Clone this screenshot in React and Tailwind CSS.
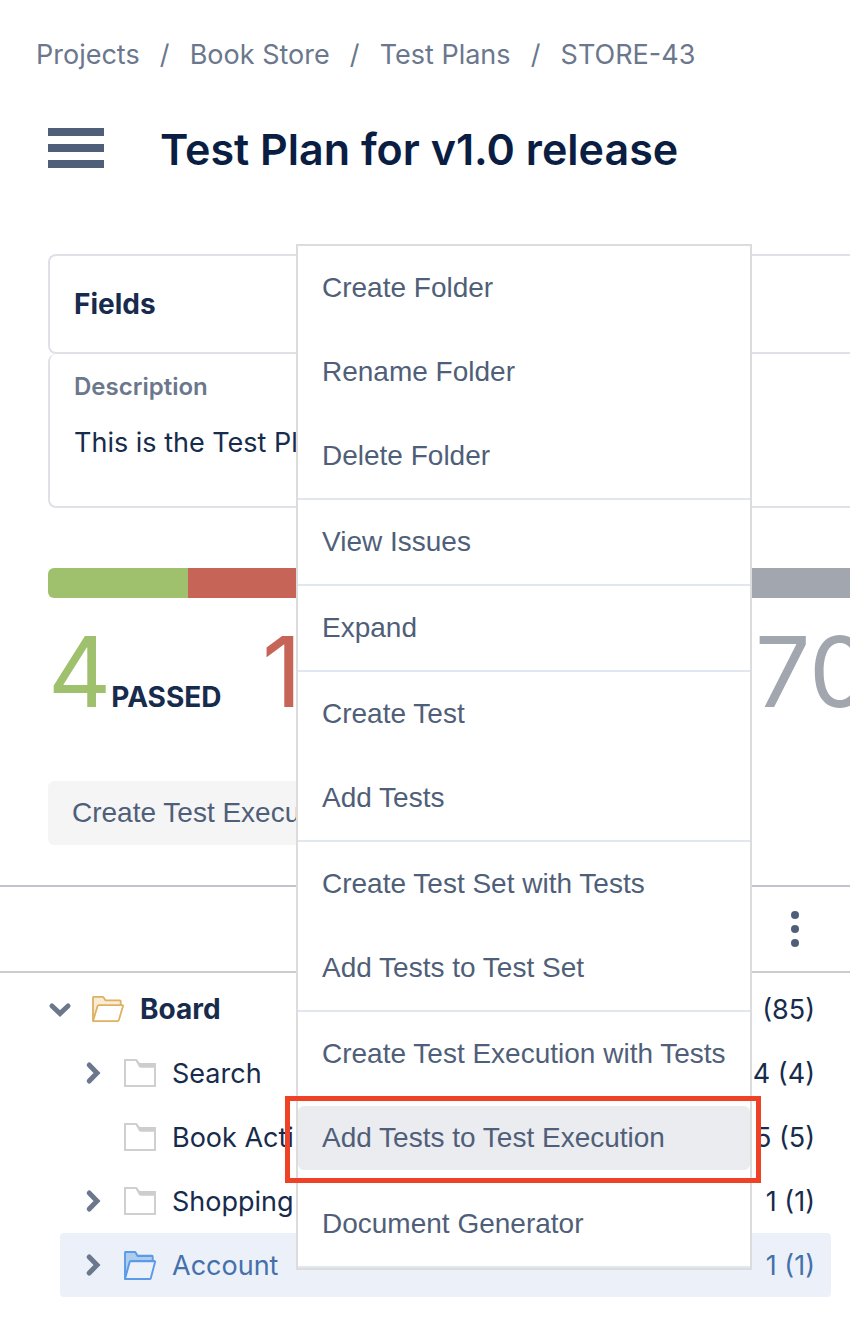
import React from "react";

const breadcrumbs = ["Projects", "Book Store", "Test Plans", "STORE-43"];

const menuGroups = [
    ["Create Folder", "Rename Folder", "Delete Folder"],
    ["View Issues"],
    ["Expand"],
    ["Create Test", "Add Tests"],
    ["Create Test Set with Tests", "Add Tests to Test Set"],
    ["Create Test Execution with Tests", "Add Tests to Test Execution"],
    ["Document Generator"],
];

const activeItem = "Add Tests to Test Execution";

const folders = [
    { name: "Search", count: "4 (4)", children: true },
    { name: "Book Acti", count: "5 (5)", children: false },
    { name: "Shopping", count: "1 (1)", children: true },
    { name: "Account", count: "1 (1)", children: true, selected: true },
];

const Chevron = ({ open }) => (
    <svg
        viewBox="0 0 32 32"
        className="size-8 shrink-0"
        fill="none"
        stroke="#6b778c"
        strokeWidth="5"
        strokeLinecap="round"
    >
        <path d={open ? "M8 13L16 20.5L24 13" : "M13.2 8L21 16L13.2 24"} />
    </svg>
);

const ClosedFolder = () => (
    <svg viewBox="0 0 32 28" className="h-7 w-8 shrink-0">
        <path d="M12.3 0L15 4H32V8.8H17Q15.6 8.8 14.8 7.4L11.5 1.5Z" fill="#cdcdcd" />
        <path d="M31 4V27H1V1H12.2L15 4.5" fill="none" stroke="#cfcfcf" strokeWidth="2" />
    </svg>
);

const OpenFolder = ({ blue }) => (
    <svg
        viewBox="0 0 32 26"
        preserveAspectRatio="none"
        className={blue ? "h-[29px] w-8 shrink-0" : "h-[26px] w-8 shrink-0"}
        stroke={blue ? "#5a9ae8" : "#deb05f"}
        strokeWidth={blue ? "1.9" : "1.8"}
        strokeLinejoin="round"
    >
        <path
            d="M1 25V1.6Q1 0.9 1.7 0.9H10.6Q11.2 0.9 11.6 1.5L13.6 4.4H28Q28.7 4.4 28.7 5.1V9"
            fill={blue ? "#aecdec" : "#f9ecd7"}
        />
        <path
            d="M1 25L5.6 10Q5.9 9.1 6.8 9.1H30.2Q31.3 9.1 31 10.1L26.8 24.3Q26.5 25.1 25.7 25.1H1Z"
            fill={blue ? "#ecf1f9" : "#ffffff"}
        />
    </svg>
);

const TreeRow = ({ folder }) => (
    <li>
        <button
            type="button"
            className={
                folder.selected
                    ? "flex h-16 w-full items-center gap-4 rounded bg-[#ecf1f9] px-4 text-[#4470ab]"
                    : "flex h-16 w-full items-center gap-4 rounded px-4"
            }
        >
            {folder.children ? <Chevron /> : <span className="w-8 shrink-0" />}
            {folder.selected ? <OpenFolder blue /> : <ClosedFolder />}
            <span className="flex-1 pt-[2px] text-left">{folder.name}</span>
            <span className="pt-[2px]">{folder.count}</span>
        </button>
    </li>
);

const ContextMenu = () => (
    <div
        role="menu"
        className="absolute top-[244px] left-[296px] border-2 border-[#dcdcdd] bg-white font-['Liberation_Sans',Arial,sans-serif] text-[28px] leading-8 text-[#505f79]"
    >
        {menuGroups.map((group) => (
            <div
                key={group[0]}
                className="flex flex-col gap-5 border-b-2 border-[#e1e6f1] py-[10px]"
            >
                {group.map((item) =>
                    item === activeItem ? (
                        <div key={item} className="relative">
                            <button
                                type="button"
                                role="menuitem"
                                className="h-16 w-full rounded-md bg-[#ebecf0] px-6 text-left whitespace-nowrap"
                            >
                                {item}
                            </button>
                            {/* Highlight frame */}
                            <div className="pointer-events-none absolute -top-[10px] -right-[11px] -bottom-[13px] -left-[13px] border-5 border-[#ee4126]" />
                        </div>
                    ) : (
                        <button
                            key={item}
                            type="button"
                            role="menuitem"
                            className="h-16 rounded-md px-6 text-left whitespace-nowrap"
                        >
                            {item}
                        </button>
                    )
                )}
            </div>
        ))}
    </div>
);

const App = () => {
    return (
        <div className="relative min-h-screen overflow-hidden bg-white pb-6 font-[Inter,sans-serif] text-[28px] leading-10 text-[#172b4d]">
            <div className="pl-12">
                {/* Breadcrumbs */}
                <nav className="-ml-3 flex pt-[35px] text-[27px] text-[#6b778c]">
                    {breadcrumbs.map((crumb, index) => (
                        <React.Fragment key={crumb}>
                            {index > 0 && <span className="w-[50px] text-center">/</span>}
                            <a href="#">{crumb}</a>
                        </React.Fragment>
                    ))}
                </nav>

                <header className="mt-[45px] flex h-14 items-center gap-14">
                    <button type="button" aria-label="Menu" className="flex flex-col gap-2">
                        <span className="h-2 w-14 bg-[#505f79]" />
                        <span className="h-2 w-14 bg-[#505f79]" />
                        <span className="h-2 w-14 bg-[#505f79]" />
                    </button>
                    <h1 className="pt-[2px] text-[43px] leading-14 font-semibold text-[#091e42]">
                        Test Plan for v1.0 release
                    </h1>
                </header>

                {/* Fields */}
                <section className="mt-[78px]">
                    <div className="rounded-l-lg border-2 border-r-0 border-[#dfe1e6] px-6 py-7">
                        <h2 className="font-bold">Fields</h2>
                    </div>
                    <div className="rounded-l-lg border-2 border-t-0 border-r-0 border-[#dfe1e6] px-6 pt-[13px] pb-[43px]">
                        <h3 className="text-2xl leading-10 font-semibold text-[#6b778c]">Description</h3>
                        <p className="mt-4 text-[27px] whitespace-nowrap">This is the Test Pl</p>
                    </div>
                </section>

                {/* Progress */}
                <div className="mt-[60px] flex h-[30px] overflow-hidden rounded-l-md">
                    <div className="w-[140px] bg-[#9fc16d]" />
                    <div className="w-[385px] bg-[#c66458]" />
                    <div className="flex-1 bg-[#a2a6af]" />
                </div>
                <div className="mt-[26px] flex h-24 items-baseline whitespace-nowrap">
                    <div className="w-[214px] shrink-0">
                        <span className="text-[98px] leading-24 text-[#9fc16d]">4</span>
                        <span className="font-bold">PASSED</span>
                    </div>
                    <div className="w-[493px] shrink-0">
                        <span className="text-[98px] leading-24 text-[#c66458]">1</span>
                    </div>
                    <div>
                        <span className="text-[98px] leading-24 text-[#a2a6af]">70</span>
                    </div>
                </div>

                <button
                    type="button"
                    className="mt-[61px] h-16 rounded-md bg-[#f5f5f6] px-6 font-['Liberation_Sans',Arial,sans-serif] text-[#505f79]"
                >
                    Create Test Execution
                </button>
            </div>

            {/* Toolbar */}
            <div className="mt-10 flex h-[88px] items-center justify-end border-t-2 border-b-2 border-t-[#c1c4cf] border-b-[#cccccc] pr-[51px]">
                <button type="button" aria-label="More" className="flex flex-col gap-[6px]">
                    <span className="size-2 rounded-full bg-[#505f79]" />
                    <span className="size-2 rounded-full bg-[#505f79]" />
                    <span className="size-2 rounded-full bg-[#505f79]" />
                </button>
            </div>

            {/* Folder tree */}
            <ul className="mt-1 mr-[19px] ml-7 text-[27px]">
                <li>
                    <button type="button" className="flex h-16 w-full items-center gap-4 px-4">
                        <Chevron open />
                        <OpenFolder />
                        <span className="flex-1 text-left text-[28px] font-bold">Board</span>
                        <span className="pt-[2px]">(85)</span>
                    </button>
                    <ul className="ml-8">
                        {folders.map((folder) => (
                            <TreeRow key={folder.name} folder={folder} />
                        ))}
                    </ul>
                </li>
            </ul>

            <ContextMenu />
        </div>
    );
};

export default App;
